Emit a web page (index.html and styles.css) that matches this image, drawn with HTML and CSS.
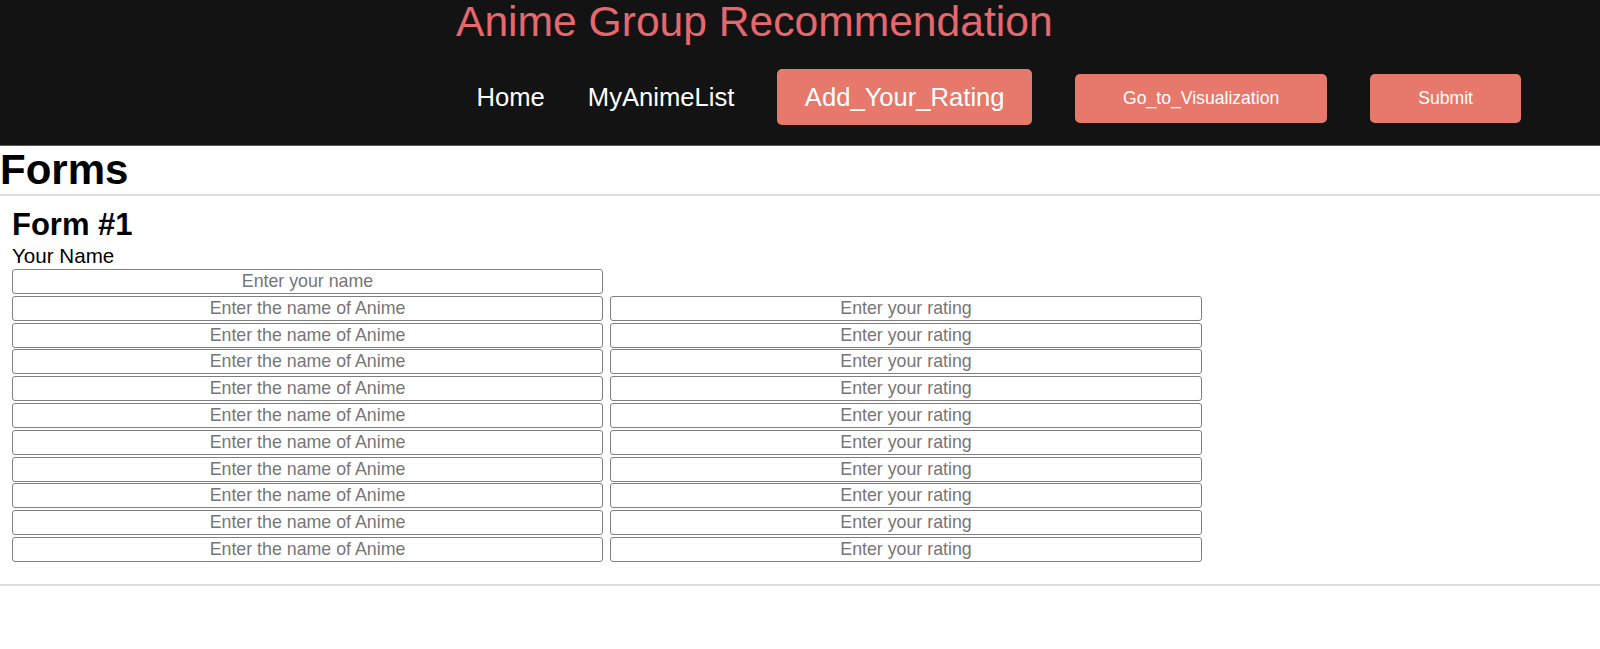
FILE: index.html
```html
<!DOCTYPE html>
<html>
<head>
<meta charset="utf-8">
<title>Anime Group Recommendation</title>
<link rel="stylesheet" href="styles.css">
</head>
<body>
<header class="topbar">
  <div class="site-title">Anime Group Recommendation</div>
  <nav class="nav">
    <a class="nav-link" href="#">Home</a>
    <a class="nav-link" href="#">MyAnimeList</a>
    <a class="nav-btn nav-btn-large" href="#">Add_Your_Rating</a>
    <button class="nav-btn nav-btn-small" type="button">Go_to_Visualization</button>
    <button class="nav-btn nav-btn-small" type="button">Submit</button>
  </nav>
</header>
<main>
  <h1 class="page-title">Forms</h1>
  <hr class="rule">
  <section class="form-block">
    <h2 class="form-title">Form #1</h2>
    <label class="field-label" for="name">Your Name</label>
    <div class="field-grid">
      <input class="field field-name" id="name" type="text" placeholder="Enter your name">
      <input class="field" type="text" placeholder="Enter the name of Anime"><input class="field" type="text" placeholder="Enter your rating">
      <input class="field" type="text" placeholder="Enter the name of Anime"><input class="field" type="text" placeholder="Enter your rating">
      <input class="field" type="text" placeholder="Enter the name of Anime"><input class="field" type="text" placeholder="Enter your rating">
      <input class="field" type="text" placeholder="Enter the name of Anime"><input class="field" type="text" placeholder="Enter your rating">
      <input class="field" type="text" placeholder="Enter the name of Anime"><input class="field" type="text" placeholder="Enter your rating">
      <input class="field" type="text" placeholder="Enter the name of Anime"><input class="field" type="text" placeholder="Enter your rating">
      <input class="field" type="text" placeholder="Enter the name of Anime"><input class="field" type="text" placeholder="Enter your rating">
      <input class="field" type="text" placeholder="Enter the name of Anime"><input class="field" type="text" placeholder="Enter your rating">
      <input class="field" type="text" placeholder="Enter the name of Anime"><input class="field" type="text" placeholder="Enter your rating">
      <input class="field" type="text" placeholder="Enter the name of Anime"><input class="field" type="text" placeholder="Enter your rating">
    </div>
  </section>
  <hr class="rule">
</main>
</body>
</html>
```

FILE: styles.css
```css
* {
  box-sizing: border-box;
}

html, body {
  margin: 0;
  padding: 0;
  background: #ffffff;
  font-family: "Liberation Sans", Arial, Helvetica, sans-serif;
  color: #000000;
}

.topbar {
  background: #131313;
  height: 146px;
  border-bottom: 1px solid #5a5a5a;
  display: flex;
  flex-direction: column;
}

.site-title {
  margin-left: 456px;
  font-size: 42.6px;
  line-height: 42px;
  color: #e6686e;
  white-space: nowrap;
}

.nav {
  margin-top: 27px;
  display: flex;
  justify-content: flex-end;
  align-items: center;
  gap: 43px;
  padding-right: 79px;
}

.nav-link {
  color: #ffffff;
  text-decoration: none;
  font-size: 25.6px;
  line-height: 30px;
}

.nav-btn {
  display: inline-flex;
  align-items: center;
  justify-content: center;
  background: #e6796b;
  color: #ffffff;
  border: none;
  border-radius: 5px;
  text-decoration: none;
  font-family: inherit;
  white-space: nowrap;
}

.nav-btn-large {
  height: 56px;
  padding: 0 27.5px;
  font-size: 25.6px;
}

.nav-btn-small {
  height: 49px;
  padding: 0 48px;
  font-size: 17.6px;
  margin-top: 3px;
}

.page-title {
  margin: 0;
  font-size: 42px;
  line-height: 48px;
  font-weight: bold;
}

.rule {
  margin: 0;
  border: none;
  border-top: 2px solid #dddddd;
  height: 0;
}

.form-block {
  padding: 12px 12px 22px 12px;
  display: flex;
  flex-direction: column;
}

.form-title {
  margin: 0;
  font-size: 31px;
  line-height: 34px;
  font-weight: bold;
}

.field-label {
  font-size: 20.6px;
  line-height: 23px;
  margin-top: 2px;
  margin-bottom: 2px;
}

.field-grid {
  display: grid;
  grid-template-columns: 591px 592px;
  grid-auto-rows: 25px;
  column-gap: 7px;
  row-gap: 1.8px;
}

.field-name {
  grid-column: 1;
}

.field-name + .field {
  grid-column: 1;
}

.field {
  height: 25px;
  border: 1px solid #808080;
  border-radius: 3px;
  background: #ffffff;
  text-align: center;
  font-family: "Liberation Sans", Arial, sans-serif;
  font-size: 17.8px;
  padding: 0 4px;
  color: #000000;
}

.field::placeholder {
  color: #767676;
}
```
